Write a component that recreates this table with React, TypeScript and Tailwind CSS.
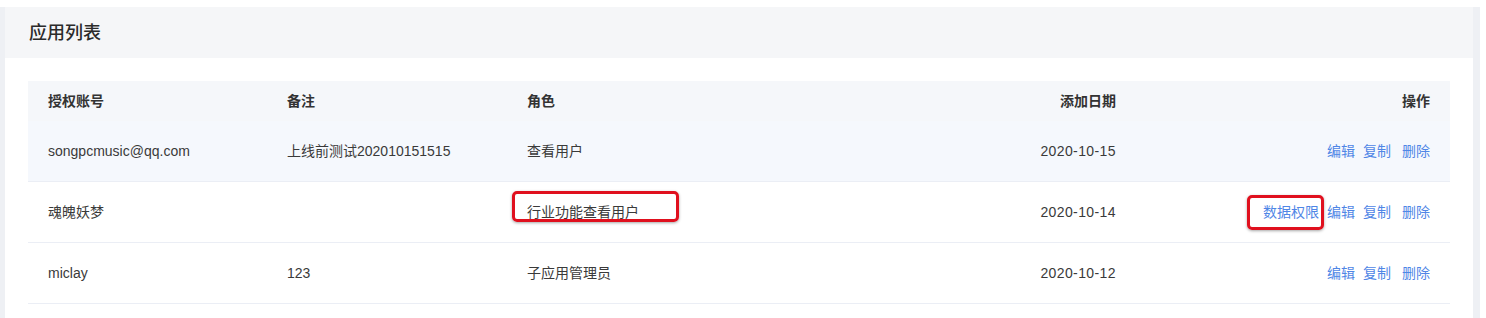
import React from "react";

const font = { fontFamily: '"Liberation Sans", "Noto Sans CJK SC", sans-serif' };

type Row = { account: string; note: string; role: string; date: string; dataPerm?: boolean; hover?: boolean; mark?: boolean };

const rows: Row[] = [
  { account: "songpcmusic@qq.com", note: "上线前测试202010151515", role: "查看用户", date: "2020-10-15", hover: true },
  { account: "魂魄妖梦", note: "", role: "行业功能查看用户", date: "2020-10-14", dataPerm: true, mark: true },
  { account: "miclay", note: "123", role: "子应用管理员", date: "2020-10-12" },
];

const cols = "grid grid-cols-[239px_240px_1fr_200px_314px]";

export default function App() {
  return (
    <div className="w-[1486px] h-[318px] overflow-hidden bg-white pt-[7px]" style={font}>
      <div className="w-[1480px] h-[311px] bg-[#eef0f4] pl-[5px] pr-[7px]">
        <div className="h-full bg-white">
          <div className="h-[51px] bg-[#f5f6f8] flex items-center pl-6 pt-[2px]">
            <span className="text-[18px] font-medium text-[#2b2b2b]">应用列表</span>
          </div>
          <div className="px-[23px] pt-[23px]">
            <div className={`${cols} h-[40px] items-center bg-[#f5f7fa] text-[14px] font-semibold text-[#333]`}>
              <div className="pl-5">授权账号</div>
              <div className="pl-5">备注</div>
              <div className="pl-5">角色</div>
              <div className="pr-5 text-right">添加日期</div>
              <div className="pr-5 text-right">操作</div>
            </div>
            {rows.map((r) => (
              <div
                key={r.account}
                className={`${cols} h-[61px] items-center border-b border-[#ebeef5] text-[14px] text-[#3a3a3a] ${r.hover ? "bg-[#f5f8fd]" : "bg-white"}`}
              >
                <div className="pl-5">{r.account}</div>
                <div className="pl-5">{r.note}</div>
                <div className="pl-5 relative h-full flex items-center">
                  {r.role}
                  {r.mark && (
                    <div className="absolute left-[5px] top-[9px] w-[167px] h-[31px] border-[3px] border-[#e0101e] rounded-[5px] shadow-[0_1px_3px_rgba(0,0,0,0.35)]" />
                  )}
                </div>
                <div className="pr-5 text-right tracking-[0.4px]">{r.date}</div>
                <div className="pr-5 flex justify-end items-center text-[#4f86e6]">
                  {r.dataPerm && (
                    <span className="relative">
                      数据权限
                      <span className="absolute -left-[16px] -right-[5px] -top-[7px] -bottom-[7px] border-[3px] border-[#e0101e] rounded-[5px] shadow-[0_1px_3px_rgba(0,0,0,0.35)]" />
                    </span>
                  )}
                  <span className="ml-2">编辑</span>
                  <span className="ml-2">复制</span>
                  <span className="ml-[11px]">删除</span>
                </div>
              </div>
            ))}
          </div>
        </div>
      </div>
    </div>
  );
}
